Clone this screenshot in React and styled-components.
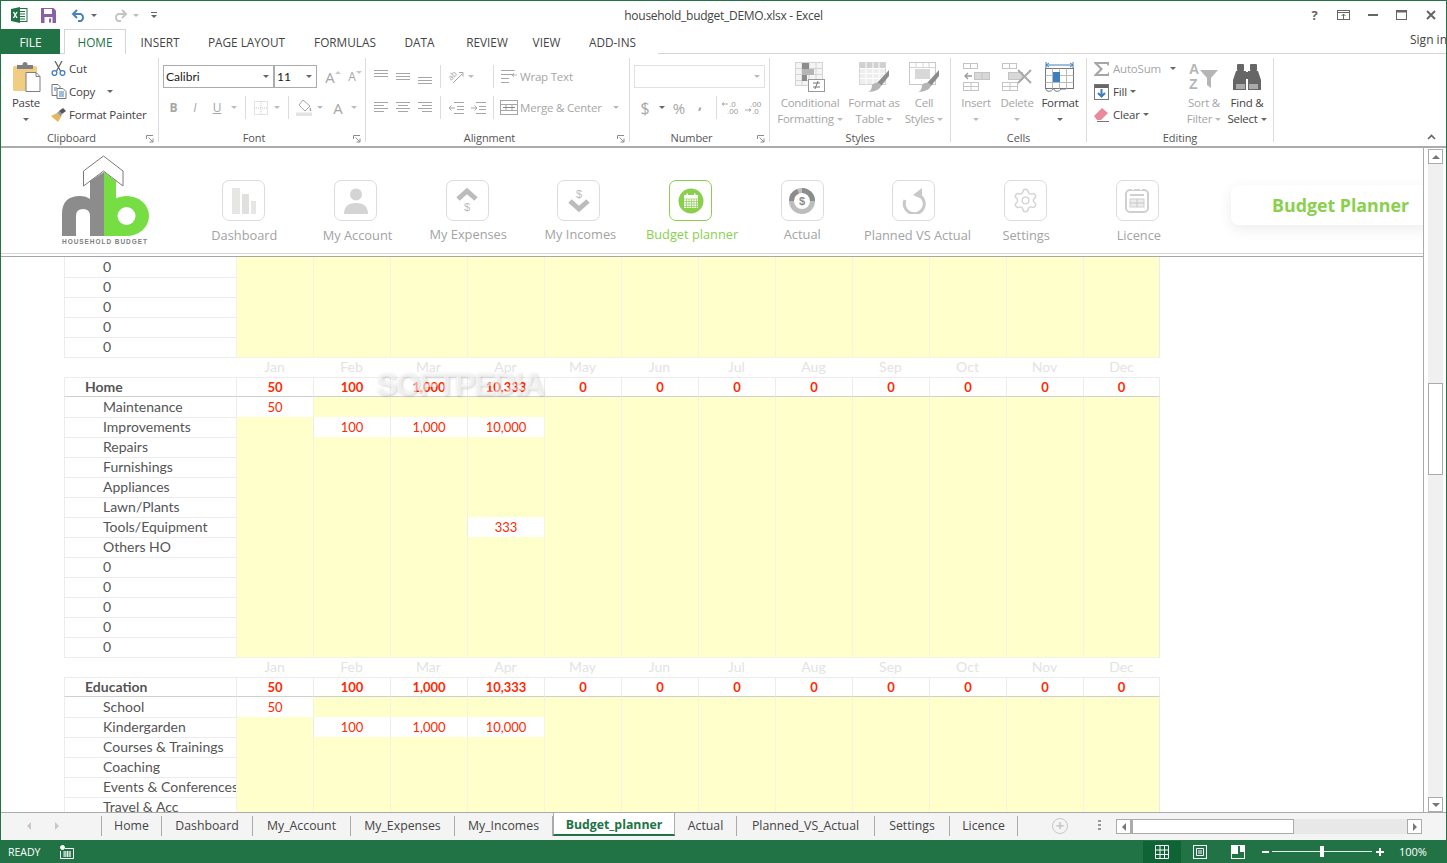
import React from 'react';
import styled, { createGlobalStyle } from 'styled-components';
import { Settings as GearIcon } from 'lucide-react';

const UI = '"Open Sans", "Noto Sans", sans-serif';
const CELL = 'Lato, "Noto Sans", sans-serif';
const GREEN = '#217346';

const Global = createGlobalStyle`
  html, body { margin: 0; padding: 0; background: #fff; }
  * { box-sizing: border-box; }
`;

const Win = styled.div`
  width: 1447px;
  height: 863px;
  display: flex;
  flex-direction: column;
  overflow: hidden;
  background: #fff;
  border: 1px solid ${GREEN};
  border-bottom: 0;
  font-family: ${UI};
  color: #444;
`;

/* title bar */
const TitleBar = styled.div`
  height: 28px;
  flex: none;
  display: grid;
  grid-template-columns: 1fr auto 1fr;
  align-items: center;
`;
const Qat = styled.div`
  display: flex;
  align-items: center;
`;
const QatItem = styled.span`
  display: flex;
  align-items: center;
  justify-content: center;
  margin-left: ${(p) => p.$ml || 0}px;
`;
const Title = styled.div`
  font-size: 12px;
  color: #444;
  letter-spacing: -0.28px;
`;
const WinBtns = styled.div`
  display: flex;
  justify-content: flex-end;
  align-items: center;
  padding-right: 1px;
`;
const WinBtn = styled.span`
  width: 29px;
  height: 20px;
  display: flex;
  align-items: center;
  justify-content: center;
  color: #666;
  font-size: 13px;
  font-weight: 700;
`;

/* tabs */
const TabRow = styled.div`
  height: 25px;
  flex: none;
  display: flex;
  border-bottom: 1px solid #d4d4d4;
  font-size: 11.8px;
`;
const FileTab = styled.div`
  width: 59px;
  height: 25px;
  background: ${GREEN};
  color: #fff;
  display: flex;
  align-items: center;
  justify-content: center;
  margin-right: 4px;
`;
const RibbonTab = styled.div`
  width: ${(p) => p.$w}px;
  height: 25px;
  flex: none;
  display: flex;
  align-items: center;
  justify-content: center;
  color: ${(p) => (p.$active ? GREEN : '#444')};
  background: #fff;
  ${(p) => p.$active && 'border: 1px solid #d4d4d4; border-bottom: 0;'}
`;
const SignIn = styled.div`
  margin-left: auto;
  margin-right: -1px;
  width: 37px;
  white-space: nowrap;
  overflow: hidden;
  font-size: 12px;
  padding-top: 2px;
`;

/* ribbon */
const Ribbon = styled.div`
  height: 94px;
  flex: none;
  display: flex;
  padding-top: 4px;
  border-bottom: 2px solid #ababab;
`;
const Group = styled.div`
  width: ${(p) => p.$w}px;
  height: 84px;
  flex: none;
  display: flex;
  flex-direction: column;
  border-right: 1px solid #dcdcdc;
`;
const GroupBody = styled.div`
  height: 73px;
  flex: none;
  display: flex;
  padding-left: ${(p) => p.$pl || 0}px;
`;
const GroupLabel = styled.div`
  height: 14px;
  line-height: 14px;
  font-size: 11px;
  letter-spacing: -0.1px;
  color: #555;
  text-align: center;
  position: relative;
  padding-right: ${(p) => (p.$launcher ? 16 : 0)}px;
`;
const Launcher = styled.svg`
  position: absolute;
  right: 4px;
  top: 4px;
`;
const SmallCol = styled.div`
  width: ${(p) => p.$w}px;
  flex: none;
  display: flex;
  flex-direction: column;
  margin-top: -1px;
`;
const SmallRow = styled.div`
  height: 23px;
  display: flex;
  align-items: center;
  font-size: 11.5px;
  letter-spacing: -0.2px;
  white-space: nowrap;
  color: ${(p) => (p.$off ? '#a6a6a6' : '#444')};
`;
const SmallIcon = styled.span`
  width: 18px;
  margin-right: ${(p) => p.$mr ?? 0}px;
  display: flex;
  align-items: center;
  justify-content: flex-start;
  flex: none;
`;
const Caret = styled.i`
  display: inline-block;
  width: 0;
  height: 0;
  flex: none;
  margin-left: ${(p) => p.$ml || 0}px;
  border-left: 3px solid transparent;
  border-right: 3px solid transparent;
  border-top: 3px solid ${(p) => (p.$off ? '#bbb' : '#666')};
`;
const LargeBtn = styled.div`
  width: ${(p) => p.$w}px;
  flex: none;
  display: flex;
  flex-direction: column;
  align-items: center;
  padding-top: 4px;
  font-size: 11.5px;
  letter-spacing: -0.25px;
  line-height: 16px;
  white-space: nowrap;
  color: ${(p) => (p.$off ? '#a6a6a6' : '#444')};
`;
const LargeIcon = styled.div`
  height: 30px;
  margin-bottom: 3px;
  display: flex;
  align-items: center;
  justify-content: center;
`;
const BtnLine = styled.div`
  height: 16px;
  display: flex;
  align-items: center;
  gap: 3px;
`;
const TwoRows = styled.div`
  padding-top: 7px;
  display: flex;
  flex-direction: column;
  gap: 8px;
`;
const ToolRow = styled.div`
  height: 23px;
  display: flex;
  align-items: center;
`;
const Tool = styled.span`
  width: ${(p) => p.$w}px;
  height: 23px;
  flex: none;
  display: flex;
  align-items: center;
  justify-content: center;
  font-size: ${(p) => p.$fs || 12}px;
  font-weight: ${(p) => (p.$bold ? 700 : 400)};
  font-style: ${(p) => (p.$it ? 'italic' : 'normal')};
  text-decoration: ${(p) => (p.$ul ? 'underline' : 'none')};
  color: #a6a6a6;
`;
const CommaTool = styled(Tool)`
  padding-bottom: 8px;
`;
const Sep = styled.span`
  width: ${(p) => p.$w}px;
  height: 23px;
  flex: none;
  margin-left: ${(p) => p.$ml || 0}px;
  display: flex;
  justify-content: center;
  &::before {
    content: '';
    width: 1px;
    background: #dcdcdc;
  }
`;
const Combo = styled.div`
  width: ${(p) => p.$w}px;
  height: 23px;
  flex: none;
  margin-right: ${(p) => p.$mr || 0}px;
  border: 1px solid ${(p) => (p.$off ? '#e1e1e1' : '#ababab')};
  display: flex;
  align-items: center;
  justify-content: space-between;
  padding: 0 4px 0 2px;
  font-family: ${CELL};
  font-size: 12px;
  color: #222;
`;
const WrapBtn = styled.span`
  display: flex;
  align-items: center;
  gap: 2px;
  color: #a6a6a6;
  font-size: 11.5px;
  letter-spacing: -0.2px;
  white-space: nowrap;
  margin-left: ${(p) => p.$ml || 0}px;
`;
const Collapse = styled.svg`
  margin-left: auto;
  margin-right: 10px;
  margin-top: 76px;
`;

/* sheet area */
const SheetWrap = styled.div`
  height: 665px;
  flex: none;
  display: flex;
  border-bottom: 1px solid #ababab;
`;
const Sheet = styled.div`
  width: 1423px;
  flex: none;
  border-right: 1px solid #ababab;
  overflow: hidden;
  position: relative;
`;
const AppHeader = styled.div`
  height: 106px;
  display: flex;
  border-bottom: 1px solid #d4d4d4;
  position: relative;
`;
const Logo = styled.svg`
  flex: none;
  margin: 7px 0 0 59px;
`;
const Nav = styled.div`
  display: flex;
  margin-left: 36px;
  padding-top: 32px;
`;
const NavItem = styled.div`
  width: 111.7px;
  display: flex;
  flex-direction: column;
  align-items: center;
  color: ${(p) => (p.$active ? '#8ad04e' : '#a3a3a3')};
  font-size: 12.8px;
  white-space: nowrap;
`;
const NavBox = styled.div`
  width: 43px;
  height: 41px;
  border: 1px solid ${(p) => (p.$active ? '#8ad04e' : '#dcdcdc')};
  border-radius: 7px;
  display: flex;
  align-items: center;
  justify-content: center;
  color: #d4d4d4;
`;
const NavLabel = styled.div`
  margin-top: ${(p) => p.$mt}px;
  margin-left: ${(p) => p.$nudge * 2}px;
  line-height: 16px;
`;
const Pill = styled.div`
  position: absolute;
  left: 1230px;
  top: 37px;
  width: 200px;
  height: 40px;
  border-radius: 8px 0 0 8px;
  background: #fff;
  box-shadow: 0 4px 14px rgba(0, 0, 0, 0.08);
  padding-left: 41px;
  line-height: 40px;
  font-size: 17.8px;
  font-weight: 700;
  color: #8ad04e;
  white-space: nowrap;
`;
const Grid = styled.div`
  border-top: 1px solid #a6a6a6;
  margin-top: 2px;
  padding-left: 63px;
  font-family: ${CELL};
  font-size: 14px;
  color: #555;
`;
const Row = styled.div`
  display: grid;
  grid-template-columns: 172px repeat(12, 77px);
  height: 20px;
  width: 1096px;
`;
const LabelCell = styled.div`
  padding-left: ${(p) => p.$pl}px;
  white-space: nowrap;
  font-weight: ${(p) => (p.$head ? 700 : 400)};
  border-left: 1px solid #ececec;
  border-bottom: 1px solid ${(p) => (p.$head ? '#cfcfcf' : '#ececec')};
  border-top: ${(p) => (p.$head ? '1px solid #ececec' : '0')};
  line-height: ${(p) => (p.$head ? 18 : 20)}px;
`;
const Cell = styled.div`
  text-align: center;
  line-height: 20px;
  font-size: 13px;
  color: #ff2a00;
  background: ${(p) => (p.$fill ? '#ffffcc' : '#fff')};
  border-left: 1px solid ${(p) => (p.$fill ? '#f4f4e0' : '#ececec')};
  border-right: ${(p) => (p.$last ? '1px solid #ececec' : '0')};
  border-bottom: 1px solid ${(p) => (p.$fill ? '#f4f4e0' : '#ececec')};
`;
const HeadCell = styled(Cell)`
  font-weight: 700;
  line-height: 18px;
  border-top: 1px solid #ececec;
  border-bottom: 1px solid #cfcfcf;
`;
const Month = styled.div`
  text-align: center;
  line-height: 20px;
  color: #e3e3e3;
`;
const Watermark = styled.div`
  position: absolute;
  left: 375px;
  top: 218px;
  font-family: "Liberation Sans", sans-serif;
  font-size: 32px;
  line-height: 36px;
  font-weight: 700;
  letter-spacing: -1.8px;
  color: rgba(255, 255, 255, 0.6);
  text-shadow: 1px 1px 3px rgba(0, 0, 0, 0.18);
  pointer-events: none;
`;

/* vertical scroll */
const VScroll = styled.div`
  width: 22px;
  flex: none;
  display: flex;
  flex-direction: column;
  padding: 1px 3px 0 4px;
  background: #fff;
`;
const VTrack = styled.div`
  flex: 1;
  background: #f0f0f0;
  position: relative;
`;
const VThumb = styled.div`
  position: absolute;
  left: 0;
  right: 0;
  top: 219px;
  height: 92px;
  background: #fff;
  border: 1px solid #ababab;
`;
const ArrowBtn = styled.div`
  width: ${(p) => p.$w || 15}px;
  height: ${(p) => p.$h || 15}px;
  flex: none;
  background: #fff;
  border: 1px solid #ababab;
  display: flex;
  align-items: center;
  justify-content: center;
`;
const Tri = styled.i`
  width: 0;
  height: 0;
  ${(p) =>
    p.$dir === 'up' || p.$dir === 'down'
      ? `border-left: 4px solid transparent; border-right: 4px solid transparent; border-${p.$dir === 'up' ? 'bottom' : 'top'}: 4px solid #777;`
      : `border-top: 4px solid transparent; border-bottom: 4px solid transparent; border-${p.$dir === 'left' ? 'right' : 'left'}: 4px solid ${p.$c || '#777'};`}
`;

/* sheet tabs */
const TabBar = styled.div`
  height: 27px;
  flex: none;
  display: flex;
  align-items: flex-start;
  background: #f4f4f4;
  font-size: 12.3px;
`;
const NavArrows = styled.div`
  width: 100px;
  height: 20px;
  margin-top: 3px;
  flex: none;
  display: flex;
  align-items: center;
  gap: 24px;
  padding-left: 26px;
`;
const SheetTab = styled.div`
  width: ${(p) => p.$w}px;
  height: ${(p) => (p.$active ? 23 : 20)}px;
  margin-top: ${(p) => (p.$active ? 0 : 3)}px;
  flex: none;
  display: flex;
  align-items: center;
  justify-content: center;
  white-space: nowrap;
  ${(p) =>
    p.$active
      ? `padding-top: 1px; background:#fff; color:${GREEN}; font-weight:700; border-bottom:2px solid ${GREEN}; border-left:1px solid #ababab; border-right:1px solid #ababab;`
      : 'padding-bottom: 1px; border-right:1px solid #ababab; color:#444;'}
  ${(p) => p.$first && 'border-left:1px solid #ababab;'}
`;
const AddSheet = styled.div`
  width: 16px;
  height: 16px;
  margin: 5px 0 0 34px;
  border: 1.5px solid #c8c8c8;
  border-radius: 50%;
  color: #c8c8c8;
  font-size: 15px;
  line-height: 12px;
  text-align: center;
  font-weight: 700;
`;
const Dots = styled.div`
  width: 3px;
  margin: 7px 0 0 30px;
  display: flex;
  flex-direction: column;
  gap: 2px;
  i {
    height: 2px;
    background: #999;
  }
`;
const HScroll = styled.div`
  margin: 6px 0 0 15px;
  width: 306px;
  height: 15px;
  display: flex;
  background: #e8e8e8;
`;
const HThumb = styled.div`
  width: 163px;
  background: #fff;
  border: 1px solid #ababab;
  border-left-width: 2px;
  margin-right: auto;
`;

/* status */
const Status = styled.div`
  height: 23px;
  flex: none;
  background: ${GREEN};
  color: #fff;
  display: flex;
  align-items: center;
  font-size: 10.5px;
  margin: 0 -1px;
  padding-left: 8px;
`;
const StatusIcon = styled.span`
  margin-left: 20px;
  display: flex;
`;
const ViewBtn = styled.div`
  width: 38px;
  height: 22px;
  display: flex;
  align-items: center;
  justify-content: center;
  background: ${(p) => (p.$on ? '#0f6435' : 'transparent')};
`;
const ZoomWrap = styled.div`
  margin-left: auto;
  display: flex;
  align-items: center;
`;
const Slider = styled.div`
  width: 100px;
  height: 1px;
  margin: 0 4px 0 3px;
  background: #e6f0ea;
  position: relative;
  &::after {
    content: '';
    position: absolute;
    left: 48px;
    top: -5px;
    width: 4px;
    height: 11px;
    background: #fff;
  }
`;
const ZoomSign = styled.span`
  width: ${(p) => (p.$plus ? 8 : 7)}px;
  height: 2px;
  margin-left: ${(p) => (p.$plus ? 0 : 5)}px;
  background: #fff;
  position: relative;
  ${(p) =>
    p.$plus &&
    `&::after { content:''; position:absolute; left:3px; top:-3px; width:2px; height:8px; background:#fff; }`}
`;
const Pct = styled.span`
  width: 63px;
  padding-left: 15px;
  font-size: 11px;
`;

/* ---- icons ---- */
const G = '#a6a6a6';
const L = '#c9c9c9';

const Lines = ({ ys, xs }) => (
  <svg width="18" height="16" viewBox="0 0 18 16" stroke={G} strokeWidth="1">
    {ys.map((y, i) => (
      <line key={i} x1={xs[i][0]} x2={xs[i][1]} y1={y + 0.5} y2={y + 0.5} />
    ))}
  </svg>
);
const AlignV = ({ off }) => {
  const xs = [[2, 16], [2, 16], [2, 16]];
  return <Lines ys={[off, off + 3, off + 6]} xs={xs} />;
};
const AlignH = ({ kind }) => {
  const long = [2, 16];
  const short = kind === 'l' ? [2, 12] : kind === 'c' ? [4, 14] : [6, 16];
  return <Lines ys={[2, 5, 8, 11]} xs={[long, short, long, short]} />;
};
const Indent = ({ flip }) => (
  <svg width="16" height="14" viewBox="0 0 16 14" stroke={G} fill="none">
    <path d="M6 1.5h10M9 5.5h7M9 8.5h7M6 12.5h10" />
    <path d={flip ? 'M1 7h6M4.5 4.5L7 7l-2.5 2.5' : 'M1 7h6M3.5 4.5L1 7l2.5 2.5'} />
  </svg>
);
const Launch = () => (
  <Launcher width="8" height="8" viewBox="0 0 8 8" fill="none" stroke="#8c8c8c">
    <path d="M0.5 4V0.5H7M2.5 2.5L7 7M7 3.5V7H3.5" />
  </Launcher>
);
const ExcelLogo = () => (
  <svg width="17" height="16" viewBox="0 0 17 16">
    <rect x="6" y="1.5" width="10" height="13" fill="#fff" stroke={GREEN} />
    <path d="M9 4.5h5M9 7h5M9 9.5h5M9 12h5" stroke={GREEN} />
    <path d="M0 2l9-2v16l-9-2z" fill={GREEN} />
    <path d="M2.5 5l3.5 6M6 5l-3.5 6" stroke="#fff" strokeWidth="1.4" />
  </svg>
);
const SaveIcon = () => (
  <svg width="15" height="15" viewBox="0 0 15 15">
    <path d="M0 0h12.5L15 2.5V15H0z" fill="#8661a8" />
    <rect x="3" y="1" width="8" height="5" fill="#fff" />
    <rect x="3.5" y="9" width="8" height="6" fill="#fff" />
    <rect x="8" y="10.5" width="2" height="4" fill="#8661a8" />
  </svg>
);
const UndoIcon = ({ c, flip }) => (
  <svg width="16" height="13" viewBox="0 0 16 13" fill="none" stroke={c} strokeWidth="2" style={flip ? { transform: 'scaleX(-1)' } : undefined}>
    <path d="M2 5h8a4 4 0 0 1 0 7H7" />
    <path d="M6 1L2 5l4 4" />
  </svg>
);
const PasteIcon = () => (
  <svg width="30" height="30" viewBox="0 0 30 30" style={{ marginLeft: 2 }}>
    <rect x="1" y="4" width="24" height="25" rx="1.5" fill="#f0cd83" />
    <path d="M5 3h16v4H5z" fill="#7f7f7f" />
    <circle cx="13" cy="2.5" r="2.5" fill="#7f7f7f" />
    <path d="M15 12h10l4 4v15H15z" fill="#fff" stroke="#7f7f7f" transform="translate(-1 -1.5)" />
    <path d="M24 10.5v4h4" fill="none" stroke="#7f7f7f" />
  </svg>
);
const CutIcon = () => (
  <svg width="15" height="15" viewBox="0 0 15 15" fill="none">
    <path d="M4 0l5.5 10M11 0L5.5 10" stroke="#666" strokeWidth="1.3" />
    <circle cx="3.5" cy="12" r="2.4" stroke="#3f7fbf" strokeWidth="1.3" />
    <circle cx="11.5" cy="12" r="2.4" stroke="#3f7fbf" strokeWidth="1.3" />
  </svg>
);
const CopyIcon = () => (
  <svg width="16" height="15" viewBox="0 0 16 15" fill="#fff">
    <path d="M1 .5h6l2 2v9H1z" stroke="#777" />
    <path d="M6 4.5h6l3 3v7H6z" stroke="#777" />
    <path d="M3 4h3M3 6h2M8 8h5M8 10h5M8 12h5" stroke="#3f7fbf" />
  </svg>
);
const BrushIcon = () => (
  <svg width="16" height="14" viewBox="0 0 16 14">
    <path d="M0 8l6-3 4 4-3 5C5 12 2 10 0 8z" fill="#e8b45e" />
    <path d="M6 5l2-2 3 3-1 3z" fill="#999" />
    <path d="M8 3l4-3 3 3-4 3z" fill="#555" />
  </svg>
);
const FontA = ({ fs, up }) => (
  <span style={{ display: 'flex', alignItems: 'flex-start', color: G, fontSize: fs }}>
    A
    <svg width="6" height="4" viewBox="0 0 6 4" style={{ marginTop: 3 }}>
      <path d={up ? 'M0 4l3-3 3 3z' : 'M0 0h6L3 3z'} fill={L} />
    </svg>
  </span>
);
const BorderIcon = () => (
  <svg width="14" height="14" viewBox="0 0 14 14" fill="none" stroke={L} strokeDasharray="1 1">
    <rect x=".5" y=".5" width="13" height="13" />
    <path d="M7 0v14M0 7h14" />
  </svg>
);
const FillIcon = () => (
  <svg width="17" height="17" viewBox="0 0 17 17">
    <path d="M7 1l7 6-5 5-6-6z" fill="#fff" stroke={G} />
    <path d="M14 8c1 2 2 3 1 4s-2-1-1-4z" fill={G} />
    <rect x="0" y="13.5" width="16" height="3.5" fill="#e3e3e3" />
  </svg>
);
const OrientIcon = () => (
  <svg width="16" height="15" viewBox="0 0 16 15" fill="none" stroke={G} overflow="visible">
    <text x="0" y="9" fontSize="8" fill={G} stroke="none" fontFamily="Open Sans" transform="rotate(-45 5 7)">ab</text>
    <path d="M5 14L14 5M11 3.5h4v4" />
  </svg>
);
const WrapIcon = () => (
  <svg width="18" height="15" viewBox="0 0 18 15" fill="none" stroke={G}>
    <path d="M1 1.5h12M1 5.5h13M1 9.5h8M1 13.5h8" />
    <path d="M10 1.5h5M17 6h-5l2-2M12 6l2 2" strokeWidth=".8" />
  </svg>
);
const MergeIcon = () => (
  <svg width="18" height="15" viewBox="0 0 18 15" fill="none" stroke={G}>
    <rect x=".5" y=".5" width="17" height="14" />
    <path d="M.5 4.5h17M.5 10.5h17M6 4.5v6M12 4.5v6" />
    <path d="M3 7.5h12" stroke="#888" />
  </svg>
);
const DecIcon = ({ more }) => (
  <svg width="18" height="15" viewBox="0 0 18 15" fill="#999" stroke="none" fontSize="8" fontFamily="Liberation Sans" overflow="visible">
    <text x={more ? 5 : 7} y="7">{more ? '.00' : '.0'}</text>
    <text x={more ? 7 : 5} y="14">{more ? '.0' : '.00'}</text>
    <path d={more ? 'M0 10h6M4 8.500l2 1.500-2 1.500' : 'M0 4h6M2 2.500L0 4l2 1.500'} stroke="#999" fill="none" strokeWidth=".8" />
  </svg>
);
const CondIcon = () => (
  <svg width="30" height="30" viewBox="0 0 30 30">
    <rect x=".5" y=".5" width="27" height="23" fill="#f4f4f4" stroke="#d4d4d4" />
    <path d="M7 .5v23M14 .5v23M21 .5v23M.5 6.500h27M.5 12.500h27M.5 18.500h27" stroke="#d4d4d4" />
    <rect x="7" y="1" width="7" height="6" fill="#8c8c8c" />
    <rect x="7" y="7" width="12" height="6" fill="#b5b5b5" />
    <rect x="7" y="13" width="5" height="6" fill="#8c8c8c" />
    <rect x="13.500" y="17.500" width="16" height="12" fill="#fff" stroke="#999" />
    <path d="M18 21h7M18 25h7M23 19l-3 8" stroke="#777" fill="none" />
  </svg>
);
const BrushOver = () => (
  <>
    <path d="M30 8L18 21l4 3L30 14z" fill="#8c8c8c" />
    <path d="M13 23c3-3 7-3 9 0 0 4-6 7-13 7 3-1 4-4 4-7z" fill="#b5b5b5" />
  </>
);
const TableIcon = () => (
  <svg width="30" height="30" viewBox="0 0 30 30">
    <rect x=".5" y=".5" width="26" height="22" fill="#eee" stroke="#d4d4d4" />
    <rect x="1" y="1" width="25" height="5" fill="#d0d0d0" />
    <path d="M7 .5v22M14 .5v22M20 .5v22M.5 6.500h26M.5 11.500h26M.5 16.500h26" stroke="#fff" />
    <BrushOver />
  </svg>
);
const CellStyleIcon = () => (
  <svg width="30" height="30" viewBox="0 0 30 30">
    <rect x=".5" y=".5" width="26" height="22" fill="#fff" stroke="#c9c9c9" />
    <path d="M.5 5.500h26M7 .5v5M14 .5v5M20 .5v5" stroke="#d4d4d4" />
    <rect x="6" y="7" width="15" height="10" fill="#d8d8d8" />
    <BrushOver />
  </svg>
);
const InsertIcon = () => (
  <svg width="27" height="28" viewBox="0 0 27 28" fill="none" stroke="#c4c4c4">
    <rect x=".5" y=".5" width="14" height="5" />
    <path d="M7.500 .5v5" />
    <rect x="11.500" y="9.500" width="15" height="7" fill="#d8d8d8" />
    <path d="M19 9.500v7" />
    <path d="M2 13h7M5 10l-3 3 3 3" stroke="#999" strokeWidth="1.3" />
    <rect x=".5" y="19.500" width="15" height="8" />
    <path d="M8 19.500v8M.5 23.500h15" />
  </svg>
);
const DeleteIcon = () => (
  <svg width="30" height="28" viewBox="0 0 30 28" fill="none" stroke="#c4c4c4">
    <rect x=".5" y=".5" width="14" height="5" />
    <path d="M7.500 .5v5" />
    <rect x="6.500" y="9.500" width="14" height="7" fill="#d8d8d8" />
    <rect x=".5" y="19.500" width="15" height="8" />
    <path d="M8 19.500v8M.5 23.500h15" />
    <path d="M16 7l13 13M29 7L16 20" stroke="#aaa" strokeWidth="2" />
  </svg>
);
const FormatIcon = () => (
  <svg width="30" height="31" viewBox="0 0 30 31" fill="none">
    <path d="M1 3h26M1 0v6M28 0v6M1 3l3-2M1 3l3 2M28 3l-3-2M28 3l-3 2" stroke="#3f7fbf" />
    <rect x=".5" y="6.500" width="28" height="20" fill="#fff" stroke="#777" />
    <path d="M7.500 6.500v20M14.500 6.500v20M21.500 6.500v20M.5 13.500h28M.5 20.500h28" stroke="#bbb" />
    <rect x="8" y="10" width="7" height="10" fill="#3f7fbf" />
    <path d="M1 27c0 3 6 3 7 0M9 27c0 3 6 3 7 0l5 0" stroke="#777" />
  </svg>
);
const SigmaIcon = () => (
  <svg width="15" height="14" viewBox="0 0 15 14">
    <path d="M0 0h15v3.500h-1.500L13 2H4l5 5-5 5h9.500l.5-1.500h1V14H0v-1l6-6-6-6z" fill="#a6a6a6" />
  </svg>
);
const FillDown = () => (
  <svg width="15" height="16" viewBox="0 0 15 16">
    <rect x=".5" y=".5" width="14" height="15" fill="#fff" stroke="#777" />
    <rect x="1" y="1" width="13" height="3" fill="#666" />
    <path d="M7.500 5v7M4 9l3.500 3.500L11 9" stroke="#3f7fbf" strokeWidth="2" fill="none" />
  </svg>
);
const EraserIcon = () => (
  <svg width="15" height="14" viewBox="0 0 15 14">
    <path d="M0 8l8-8 6 5-7 7H3z" fill="#e98a9b" />
    <path d="M3 13.500h12" stroke="#777" />
  </svg>
);
const SortIcon = () => (
  <svg width="30" height="30" viewBox="0 0 30 30" fill="#b5b5b5" fontFamily="Liberation Sans" fontWeight="700" fontSize="14">
    <text x="0" y="12">A</text>
    <text x="0" y="27">Z</text>
    <path d="M11 8h18l-7 8v10l-4-3v-7z" />
  </svg>
);
const FindIcon = () => (
  <svg width="28" height="26" viewBox="0 0 28 26" fill="#666">
    <rect x="4" y="0" width="7" height="7" rx="1" />
    <rect x="17" y="0" width="7" height="7" rx="1" />
    <path d="M3 7h10v19H0V16zM25 7H15v19h13V16z" />
    <rect x="12" y="8" width="4" height="7" />
    <path d="M3 20h9v5H3zM16 20h9v5h-9z" fill="#aaa" />
  </svg>
);
const LogoMark = () => (
  <Logo width="92" height="95" viewBox="60 155 92 95">
    <path d="M62 236V214q0-18 18-18 6 0 10 3V181l14-9v64H90V216q0-7-7-7t-7 7v20z" fill="#8c8c8c" />
    <path d="M104 172l12 9v55h-12z" fill="#76dd43" />
    <ellipse cx="126.500" cy="216" rx="22.500" ry="20" fill="#76dd43" />
    <rect x="115" y="226" width="12" height="10" fill="#76dd43" />
    <circle cx="126.500" cy="216" r="9" fill="#fff" />
    <path d="M103.500 156L83.500 171v15l20-15 19.500 15v-15z" fill="#fff" stroke="#7a7a7a" />
    <text x="62" y="244" fontFamily="Liberation Sans, sans-serif" fontSize="6.500" fontWeight="700" letterSpacing="0.95" fill="#808080">HOUSEHOLD BUDGET</text>
  </Logo>
);
const BarsNav = () => (
  <svg width="24" height="26" viewBox="0 0 24 26">
    <rect x="0" y="0" width="8" height="26" fill="#e6e6e4" />
    <rect x="10" y="6" width="7" height="20" fill="#e0e0de" />
    <rect x="19" y="13" width="5" height="13" fill="#e6e6e4" />
  </svg>
);
const UserNav = () => (
  <svg width="24" height="26" viewBox="0 0 24 26" fill="#d4d4d4">
    <circle cx="12" cy="6.500" r="6" />
    <path d="M0 26c0-8 5-11 12-11s12 3 12 11z" />
  </svg>
);
const ChevronNav = ({ down }) => (
  <svg width="22" height="28" viewBox="0 0 22 28" fill="none">
    {down ? (
      <>
        <text x="11" y="11" textAnchor="middle" fontSize="11" fill="#bcbcbc" fontFamily="Liberation Sans">$</text>
        <path d="M2 14l9 8 9-8" stroke="#bcbcbc" strokeWidth="5" />
      </>
    ) : (
      <>
        <path d="M2 12l9-8 9 8" stroke="#bcbcbc" strokeWidth="5" />
        <text x="11" y="24" textAnchor="middle" fontSize="11" fill="#bcbcbc" fontFamily="Liberation Sans">$</text>
      </>
    )}
  </svg>
);
const CalNav = () => (
  <svg width="26" height="26" viewBox="0 0 26 26">
    <circle cx="13" cy="13" r="12.500" fill="#8ad04e" />
    <rect x="6" y="7" width="14" height="13" fill="#fff" />
    <path d="M6 11h14M8.500 11v9M11 11v9M13.500 11v9M16 11v9M18.500 11v9M6 13.500h14M6 16h14M6 18.500h14" stroke="#8ad04e" strokeWidth=".7" />
    <rect x="8.500" y="5.500" width="1.500" height="3" fill="#fff" />
    <rect x="16" y="5.500" width="1.500" height="3" fill="#fff" />
  </svg>
);
const DonutNav = () => (
  <svg width="26" height="26" viewBox="0 0 26 26" fill="none">
    <circle cx="13" cy="13" r="10.500" stroke="#bdbdbd" strokeWidth="5" />
    <path d="M13 2.500a10.500 10.500 0 0 1 10.500 10.500" stroke="#8c8c8c" strokeWidth="5" />
    <path d="M2.500 13A10.500 10.500 0 0 1 9 3.300" stroke="#8c8c8c" strokeWidth="5" />
    <text x="13" y="17" textAnchor="middle" fontSize="11" fontWeight="700" fill="#8c8c8c" fontFamily="Liberation Sans">$</text>
  </svg>
);
const UndoNav = () => (
  <svg width="24" height="26" viewBox="0 0 24 26" fill="none">
    <path d="M3 12a10 10 0 1 0 14-5" stroke="#c8c8c8" strokeWidth="3" />
    <path d="M20 0v11l-9-4z" fill="#c8c8c8" />
  </svg>
);
const LicenceNav = () => (
  <svg width="24" height="25" viewBox="0 0 24 25" fill="none" stroke="#d0d0d0">
    <rect x="1" y="2" width="22" height="22" rx="4" strokeWidth="2" />
    <path d="M5 7h14" strokeWidth="2" />
    <rect x="5" y="11" width="14" height="8" fill="#ececec" />
    <path d="M5 15h14M12 11v8" stroke="#c8c8c8" />
    <path d="M8 0v2M16 0v2" strokeWidth="2" stroke="#fff" />
  </svg>
);
const StatusCalc = () => (
  <svg width="14" height="14" viewBox="0 0 14 14" fill="none" stroke="#fff">
    <circle cx="2.500" cy="2.500" r="2" fill="#fff" />
    <path d="M5 3.500h8.500V13.500H.5V6" />
    <path d="M3 7h8M3 9h8M3 11h8M5 6v6M7.500 6v6M10 6v6" strokeWidth=".8" />
  </svg>
);
const NormalView = () => (
  <svg width="14" height="14" viewBox="0 0 14 14" fill="none" stroke="#fff">
    <path d="M.5 .5h13v13H.5zM.5 5h13M.5 9.500h13M5 .5v13M9.500 .5v13" />
  </svg>
);
const PageView = () => (
  <svg width="14" height="14" viewBox="0 0 14 14" fill="none" stroke="#fff">
    <rect x=".5" y=".5" width="13" height="13" />
    <path d="M3.500 3.500h7v7h-7zM5 6h4M5 8h4" />
  </svg>
);
const BreakView = () => (
  <svg width="14" height="14" viewBox="0 0 14 14" fill="none" stroke="#fff">
    <rect x=".5" y=".5" width="13" height="13" />
    <path d="M1 1h6v8H1zM9 1h4v6H9z" fill="#fff" stroke="none" />
  </svg>
);

/* ---- data ---- */
const MONTHS = ['Jan', 'Feb', 'Mar', 'Apr', 'May', 'Jun', 'Jul', 'Aug', 'Sep', 'Oct', 'Nov', 'Dec'];
const HEAD_VALUES = ['50', '100', '1,000', '10,333', '0', '0', '0', '0', '0', '0', '0', '0'];
const blank = (label) => ({ label, values: {} });

const SECTIONS = [
  {
    rows: [blank('0'), blank('0'), blank('0'), blank('0'), blank('0')],
  },
  {
    head: 'Home',
    rows: [
      { label: 'Maintenance', values: { 0: '50' } },
      { label: 'Improvements', values: { 1: '100', 2: '1,000', 3: '10,000' } },
      blank('Repairs'),
      blank('Furnishings'),
      blank('Appliances'),
      blank('Lawn/Plants'),
      { label: 'Tools/Equipment', values: { 3: '333' } },
      blank('Others HO'),
      blank('0'),
      blank('0'),
      blank('0'),
      blank('0'),
      blank('0'),
    ],
  },
  {
    head: 'Education',
    rows: [
      { label: 'School', values: { 0: '50' } },
      { label: 'Kindergarden', values: { 1: '100', 2: '1,000', 3: '10,000' } },
      blank('Courses & Trainings'),
      blank('Coaching'),
      blank('Events & Conferences'),
      blank('Travel & Acc'),
    ],
  },
];

const NAV = [
  { label: 'Dashboard', icon: <BarsNav />, mt: 6, nudge: 0.5 },
  { label: 'My Account', icon: <UserNav />, mt: 6, nudge: 2 },
  { label: 'My Expenses', icon: <ChevronNav />, mt: 5, nudge: 1 },
  { label: 'My Incomes', icon: <ChevronNav down />, mt: 5, nudge: 1.5 },
  { label: 'Budget planner', icon: <CalNav />, mt: 5, nudge: 1.5, active: true },
  { label: 'Actual', icon: <DonutNav />, mt: 5, nudge: 0 },
  { label: 'Planned VS Actual', icon: <UndoNav />, mt: 6, nudge: 3.5 },
  { label: 'Settings', icon: <GearIcon size={27} strokeWidth={1.3} />, mt: 6, nudge: 0.5 },
  { label: 'Licence', icon: <LicenceNav />, mt: 6, nudge: 1.5 },
];

const RIBBON_TABS = [
  ['INSERT', 68],
  ['PAGE LAYOUT', 105],
  ['FORMULAS', 92],
  ['DATA', 57],
  ['REVIEW', 78],
  ['VIEW', 41],
  ['ADD-INS', 91],
];

const SHEET_TABS = [
  ['Home', 61],
  ['Dashboard', 91],
  ['My_Account', 98],
  ['My_Expenses', 104],
  ['My_Incomes', 98],
  ['Budget_planner', 122, true],
  ['Actual', 62],
  ['Planned_VS_Actual', 138],
  ['Settings', 75],
  ['Licence', 68],
];

const Large = ({ w, icon, lines, off, caretOnly }) => (
  <LargeBtn $w={w} $off={off}>
    <LargeIcon>{icon}</LargeIcon>
    {lines.map((t, i) => (
      <BtnLine key={t}>
        {t}
        {!caretOnly && i === lines.length - 1 && <Caret $off={off} />}
      </BtnLine>
    ))}
    {caretOnly && (
      <BtnLine>
        <Caret $off={off} />
      </BtnLine>
    )}
  </LargeBtn>
);

function SheetSection({ section }) {
  return (
    <>
      {section.head && (
        <>
          <Row>
            <div />
            {MONTHS.map((m) => (
              <Month key={m}>{m}</Month>
            ))}
          </Row>
          <Row>
            <LabelCell $head $pl={20}>{section.head}</LabelCell>
            {HEAD_VALUES.map((v, i) => (
              <HeadCell key={i} $last={i === 11}>{v}</HeadCell>
            ))}
          </Row>
        </>
      )}
      {section.rows.map((row, r) => (
        <Row key={r}>
          <LabelCell $pl={38}>{row.label}</LabelCell>
          {MONTHS.map((m, i) => (
            <Cell key={m} $fill={!row.values[i]} $last={i === 11}>{row.values[i]}</Cell>
          ))}
        </Row>
      ))}
    </>
  );
}

export default function App() {
  return (
    <Win>
      <Global />
      <TitleBar>
        <Qat>
          <QatItem $ml={10}><ExcelLogo /></QatItem>
          <QatItem $ml={13}><SaveIcon /></QatItem>
          <QatItem $ml={15}><UndoIcon c="#4a82bd" /></QatItem>
          <QatItem $ml={4}><Caret /></QatItem>
          <QatItem $ml={15}><UndoIcon c="#c4c4c4" flip /></QatItem>
          <QatItem $ml={5}><Caret $off /></QatItem>
          <QatItem $ml={12}>
            <svg width="6" height="6" viewBox="0 0 6 6" fill="#666"><path d="M0 0h6v1H0zM0 3h6L3 6z" /></svg>
          </QatItem>
        </Qat>
        <Title>household_budget_DEMO.xlsx - Excel</Title>
        <WinBtns>
          <WinBtn>?</WinBtn>
          <WinBtn>
            <svg width="13" height="10" viewBox="0 0 13 10" fill="none" stroke="#666"><rect x=".5" y=".5" width="12" height="9" /><path d="M.5 2.500h12M6.500 9V4M4.500 6l2-2 2 2" /></svg>
          </WinBtn>
          <WinBtn>
            <svg width="10" height="2" viewBox="0 0 10 2"><rect width="10" height="2" fill="#666" /></svg>
          </WinBtn>
          <WinBtn>
            <svg width="11" height="10" viewBox="0 0 11 10" fill="none" stroke="#666"><rect x=".5" y=".5" width="10" height="9" /><path d="M0 1.500h11" strokeWidth="2" /></svg>
          </WinBtn>
          <WinBtn>
            <svg width="10" height="10" viewBox="0 0 10 10" stroke="#666" strokeWidth="2"><path d="M1 1l8 8M9 1l-8 8" /></svg>
          </WinBtn>
        </WinBtns>
      </TitleBar>

      <TabRow>
        <FileTab>FILE</FileTab>
        <RibbonTab $w={62} $active>HOME</RibbonTab>
        {RIBBON_TABS.map(([t, w]) => (
          <RibbonTab key={t} $w={w}>{t}</RibbonTab>
        ))}
        <SignIn>Sign in</SignIn>
      </TabRow>

      <Ribbon>
        <Group $w={158}>
          <GroupBody>
            <Large w={50} icon={<PasteIcon />} lines={['Paste']} caretOnly />
            <SmallCol $w={100}>
              <SmallRow><SmallIcon><CutIcon /></SmallIcon>Cut</SmallRow>
              <SmallRow><SmallIcon><CopyIcon /></SmallIcon>Copy<Caret $ml={12} /></SmallRow>
              <SmallRow><SmallIcon><BrushIcon /></SmallIcon>Format Painter</SmallRow>
            </SmallCol>
          </GroupBody>
          <GroupLabel $launcher>Clipboard<Launch /></GroupLabel>
        </Group>

        <Group $w={207}>
          <GroupBody $pl={4}>
            <TwoRows>
              <ToolRow>
                <Combo $w={111}>Calibri<Caret /></Combo>
                <Combo $w={43} $mr={5}>11<Caret /></Combo>
                <Tool $w={22}><FontA fs={15} up /></Tool>
                <Tool $w={22}><FontA fs={12} /></Tool>
              </ToolRow>
              <ToolRow>
                <Tool $w={21} $bold>B</Tool>
                <Tool $w={22} $it>I</Tool>
                <Tool $w={22} $ul>U</Tool>
                <Tool $w={12}><Caret $off /></Tool>
                <Sep $w={11} />
                <Tool $w={20}><BorderIcon /></Tool>
                <Tool $w={12}><Caret $off /></Tool>
                <Sep $w={10} />
                <Tool $w={22}><FillIcon /></Tool>
                <Tool $w={10}><Caret $off /></Tool>
                <Tool $w={26} $fs={15}>A</Tool>
                <Tool $w={6}><Caret $off /></Tool>
              </ToolRow>
            </TwoRows>
          </GroupBody>
          <GroupLabel $launcher>Font<Launch /></GroupLabel>
        </Group>

        <Group $w={264}>
          <GroupBody $pl={4}>
            <TwoRows>
              <ToolRow>
                <Tool $w={22}><AlignV off={1} /></Tool>
                <Tool $w={22}><AlignV off={4} /></Tool>
                <Tool $w={22}><AlignV off={8} /></Tool>
                <Sep $w={8} />
                <Tool $w={24}><OrientIcon /></Tool>
                <Tool $w={6}><Caret $off /></Tool>
                <Sep $w={10} $ml={14} />
                <WrapBtn $ml={2}><WrapIcon />Wrap Text</WrapBtn>
              </ToolRow>
              <ToolRow>
                <Tool $w={22}><AlignH kind="l" /></Tool>
                <Tool $w={22}><AlignH kind="c" /></Tool>
                <Tool $w={22}><AlignH kind="r" /></Tool>
                <Sep $w={8} />
                <Tool $w={23}><Indent /></Tool>
                <Tool $w={21}><Indent flip /></Tool>
                <Sep $w={10} />
                <WrapBtn $ml={2}><MergeIcon />Merge &amp; Center<Caret $off $ml={9} /></WrapBtn>
              </ToolRow>
            </TwoRows>
          </GroupBody>
          <GroupLabel $launcher>Alignment<Launch /></GroupLabel>
        </Group>

        <Group $w={140}>
          <GroupBody $pl={4}>
            <TwoRows>
              <ToolRow>
                <Combo $w={131} $off><span /><Caret $off /></Combo>
              </ToolRow>
              <ToolRow>
                <Tool $w={22} $fs={16}>$</Tool>
                <Tool $w={11}><Caret /></Tool>
                <Tool $w={24} $fs={15}>%</Tool>
                <CommaTool $w={18} $fs={14} $bold>,</CommaTool>
                <Sep $w={15} />
                <Tool $w={14}><DecIcon more={false} /></Tool>
                <Tool $w={32}><DecIcon more /></Tool>
              </ToolRow>
            </TwoRows>
          </GroupBody>
          <GroupLabel $launcher>Number<Launch /></GroupLabel>
        </Group>

        <Group $w={181}>
          <GroupBody $pl={2}>
            <Large w={76} off icon={<CondIcon />} lines={['Conditional', 'Formatting']} />
            <Large w={52} off icon={<TableIcon />} lines={['Format as', 'Table']} />
            <Large w={48} off icon={<CellStyleIcon />} lines={['Cell', 'Styles']} />
          </GroupBody>
          <GroupLabel>Styles</GroupLabel>
        </Group>

        <Group $w={136}>
          <GroupBody $pl={4}>
            <Large w={42} off icon={<InsertIcon />} lines={['Insert']} caretOnly />
            <Large w={40} off icon={<DeleteIcon />} lines={['Delete']} caretOnly />
            <Large w={46} icon={<FormatIcon />} lines={['Format']} caretOnly />
          </GroupBody>
          <GroupLabel>Cells</GroupLabel>
        </Group>

        <Group $w={187}>
          <GroupBody $pl={7}>
            <SmallCol $w={88}>
              <SmallRow $off><SmallIcon $mr={1}><SigmaIcon /></SmallIcon>AutoSum<Caret $ml={9} /></SmallRow>
              <SmallRow><SmallIcon $mr={1}><FillDown /></SmallIcon>Fill<Caret $ml={3} /></SmallRow>
              <SmallRow><SmallIcon $mr={1}><EraserIcon /></SmallIcon>Clear<Caret $ml={3} /></SmallRow>
            </SmallCol>
            <Large w={44} off icon={<SortIcon />} lines={['Sort &', 'Filter']} />
            <Large w={42} icon={<FindIcon />} lines={['Find &', 'Select']} />
          </GroupBody>
          <GroupLabel>Editing</GroupLabel>
        </Group>

        <Collapse width="9" height="6" viewBox="0 0 9 6" fill="none" stroke="#666" strokeWidth="1.6">
          <path d="M1 5l3.500-3.500L8 5" />
        </Collapse>
      </Ribbon>

      <SheetWrap>
        <Sheet>
          <AppHeader>
            <LogoMark />
            <Nav>
              {NAV.map((n) => (
                <NavItem key={n.label} $active={n.active}>
                  <NavBox $active={n.active}>{n.icon}</NavBox>
                  <NavLabel $mt={n.mt} $nudge={n.nudge}>{n.label}</NavLabel>
                </NavItem>
              ))}
            </Nav>
            <Pill>Budget Planner</Pill>
          </AppHeader>
          <Grid>
            {SECTIONS.map((s, i) => (
              <SheetSection key={i} section={s} />
            ))}
          </Grid>
          <Watermark>SOFTPEDIA</Watermark>
        </Sheet>
        <VScroll>
          <ArrowBtn><Tri $dir="up" /></ArrowBtn>
          <VTrack><VThumb /></VTrack>
          <ArrowBtn><Tri $dir="down" /></ArrowBtn>
        </VScroll>
      </SheetWrap>

      <TabBar>
        <NavArrows>
          <Tri $dir="left" $c="#c8c8c8" />
          <Tri $dir="right" $c="#c8c8c8" />
        </NavArrows>
        {SHEET_TABS.map(([t, w, active], i) => (
          <SheetTab key={t} $w={w} $active={active} $first={i === 0}>{t}</SheetTab>
        ))}
        <AddSheet>+</AddSheet>
        <Dots><i /><i /><i /></Dots>
        <HScroll>
          <ArrowBtn $w={15}><Tri $dir="left" /></ArrowBtn>
          <HThumb />
          <ArrowBtn $w={15}><Tri $dir="right" /></ArrowBtn>
        </HScroll>
      </TabBar>

      <Status>
        READY
        <StatusIcon><StatusCalc /></StatusIcon>
        <ZoomWrap>
          <ViewBtn $on><NormalView /></ViewBtn>
          <ViewBtn><PageView /></ViewBtn>
          <ViewBtn><BreakView /></ViewBtn>
          <ZoomSign />
          <Slider />
          <ZoomSign $plus />
          <Pct>100%</Pct>
        </ZoomWrap>
      </Status>
    </Win>
  );
}
